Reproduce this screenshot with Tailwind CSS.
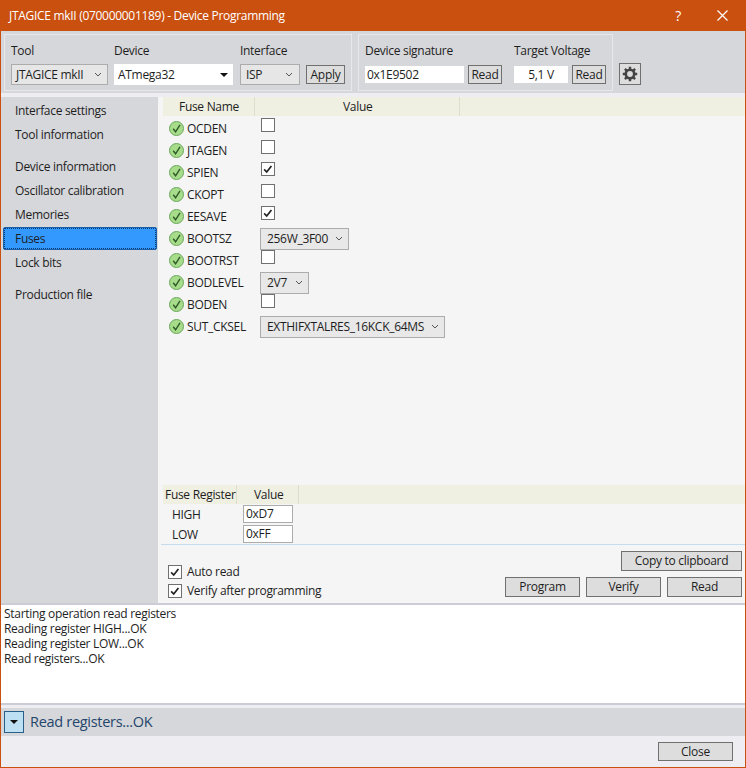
<!DOCTYPE html>
<html lang="en">
<head>
  <meta charset="UTF-8">
  <title>Device Programming</title>
  <script src="https://cdn.jsdelivr.net/npm/@tailwindcss/browser@4"></script>
</head>
<body class="font-['Open_Sans','Noto_Sans',sans-serif] text-[12px] leading-[16px] tracking-[-0.3px] text-[#1e1e1e] bg-white">
  <svg class="hidden">
    <symbol id="ok" viewBox="0 0 15 15">
      <circle cx="7.5" cy="7.5" r="7" fill="#a6dc8a" stroke="#6aa85c" stroke-width="1"/>
      <path d="M4.2 7.8 6.6 10.8 11 3.8" fill="none" stroke="#2f5a28" stroke-width="1.4"/>
    </symbol>
    <symbol id="tick" viewBox="0 0 14 14">
      <path d="M2.5 7.5 5.5 10.5 11 3.5" fill="none" stroke="#222" stroke-width="2"/>
    </symbol>
    <symbol id="chev" viewBox="0 0 8 5">
      <path d="M1 1 4 4 7 1" fill="none" stroke="#555" stroke-width="1"/>
    </symbol>
  </svg>

  <div class="w-[746px] h-[768px] flex flex-col border border-t-0 border-[#ca5010] overflow-hidden bg-[#eeeef2]">
    <!-- Title bar -->
    <div class="h-[31px] shrink-0 bg-[#ca5010] text-white flex items-center pl-[8px]">
      <span>JTAGICE mkII (070000001189) - Device Programming</span>
      <span class="ml-auto mr-[36px] text-[14px]">?</span>
      <svg class="mr-[17px]" width="11" height="11" viewBox="0 0 11 11"><path d="M.5.5l10 10M10.5.5l-10 10" stroke="#fff" stroke-width="1.2"/></svg>
    </div>

    <!-- Toolbar -->
    <div class="h-[62px] shrink-0 bg-[#d6d7da] flex items-start pt-[3px] pl-[3px]">
      <div class="w-[348px] h-[57px] border border-[#e8e8ec] flex pl-[6px] pt-[8px] gap-[6px]">
        <div class="w-[97px]">
          <div>Tool</div>
          <div class="mt-[5px] h-[21px] w-[97px] bg-[#e6e6e6] border border-[#acacac] flex items-center pl-[4px] pr-[5px] justify-between"><span>JTAGICE mkII</span><svg width="8" height="5"><use href="#chev"/></svg></div>
        </div>
        <div class="w-[119px]">
          <div>Device</div>
          <div class="mt-[5px] h-[21px] bg-white flex items-center pl-[4px] pr-[5px] justify-between"><span>ATmega32</span><svg width="8" height="4" viewBox="0 0 8 4"><path d="M0 0h8L4 4z" fill="#111"/></svg></div>
        </div>
        <div class="ml-[1px]">
          <div>Interface</div>
          <div class="mt-[5px] flex gap-[6px]">
            <div class="h-[21px] w-[60px] bg-[#e6e6e6] border border-[#acacac] flex items-center pl-[5px] pr-[6px] justify-between"><span>ISP</span><svg width="8" height="5"><use href="#chev"/></svg></div>
            <div class="h-[19px] w-[39px] mt-[1px] bg-[#dddddd] border border-[#707070] flex items-center justify-center">Apply</div>
          </div>
        </div>
      </div>
      <div class="ml-[6px] w-[255px] h-[57px] border border-[#e8e8ec] flex pl-[6px] pt-[8px]">
        <div class="w-[149px]">
          <div>Device signature</div>
          <div class="mt-[7px] flex gap-[4px]">
            <div class="h-[17px] w-[99px] bg-white flex items-center pl-[2px]">0x1E9502</div>
            <div class="h-[19px] w-[34px] -mt-[1px] bg-[#dddddd] border border-[#707070] flex items-center justify-center">Read</div>
          </div>
        </div>
        <div>
          <div>Target Voltage</div>
          <div class="mt-[7px] flex gap-[4px]">
            <div class="h-[17px] w-[54px] bg-white flex items-center justify-center">5,1 V</div>
            <div class="h-[19px] w-[34px] -mt-[1px] bg-[#dddddd] border border-[#707070] flex items-center justify-center">Read</div>
          </div>
        </div>
      </div>
      <div class="ml-[6px] mt-[29px] w-[22px] h-[22px] bg-[#dddddd] border border-[#707070] flex items-center justify-center">
        <svg width="16" height="16" viewBox="0 0 16 16"><circle cx="8" cy="8" r="4.2" fill="none" stroke="#444" stroke-width="2.6"/><path d="M8 .8v2.6M8 12.6v2.6M.8 8h2.6M12.6 8h2.6M2.9 2.9l1.9 1.9M11.2 11.2l1.9 1.9M13.1 2.9l-1.9 1.9M4.8 11.2l-1.9 1.9" stroke="#444" stroke-width="2.4"/></svg>
      </div>
    </div>

    <!-- Main -->
    <div class="h-[506px] shrink-0 mt-[4px] flex">
      <!-- Sidebar -->
      <div class="w-[157px] shrink-0 bg-[#d6d7da] pt-[2px]">
        <div class="h-[24px] pl-[14px] flex items-center">Interface settings</div>
        <div class="h-[24px] pl-[14px] flex items-center">Tool information</div>
        <div class="h-[24px] pl-[14px] flex items-center mt-[8px]">Device information</div>
        <div class="h-[24px] pl-[14px] flex items-center">Oscillator calibration</div>
        <div class="h-[24px] pl-[14px] flex items-center">Memories</div>
        <div class="h-[23px] mb-[1px] ml-[2px] w-[154px] pl-[11px] flex items-center bg-[#3399ff] border border-[#1a5fa8] rounded-[2px] outline-1 outline-dotted -outline-offset-2 outline-[#0b3d78]">Fuses</div>
        <div class="h-[24px] pl-[14px] flex items-center">Lock bits</div>
        <div class="h-[24px] pl-[14px] flex items-center mt-[8px]">Production file</div>
      </div>

      <!-- Fuses panel -->
      <div class="flex-1 bg-[#f5f5f5] flex flex-col">
        <div class="h-[19px] ml-[5px] bg-[#efefe2] flex items-center">
          <div class="w-[92px] h-full border-r border-[#dedecf] pl-[16px] flex items-center">Fuse Name</div>
          <div class="w-[205px] h-full border-r border-[#dedecf] pl-[88px] flex items-center">Value</div>
        </div>
        <div class="ml-[11px] mt-[1px] flex flex-col">
          <div class="h-[22px] flex items-center"><svg width="15" height="15"><use href="#ok"/></svg><span class="w-[75px] ml-[3px] mt-[2px]">OCDEN</span><div class="w-[14px] h-[14px] ml-[-1px] -mt-[6px] bg-white border border-[#707070]"></div></div>
          <div class="h-[22px] flex items-center"><svg width="15" height="15"><use href="#ok"/></svg><span class="w-[75px] ml-[3px] mt-[2px]">JTAGEN</span><div class="w-[14px] h-[14px] ml-[-1px] -mt-[6px] bg-white border border-[#707070]"></div></div>
          <div class="h-[22px] flex items-center"><svg width="15" height="15"><use href="#ok"/></svg><span class="w-[75px] ml-[3px] mt-[2px]">SPIEN</span><div class="w-[14px] h-[14px] ml-[-1px] -mt-[6px] bg-white border border-[#707070]"><svg class="block" width="12" height="12"><use href="#tick"/></svg></div></div>
          <div class="h-[22px] flex items-center"><svg width="15" height="15"><use href="#ok"/></svg><span class="w-[75px] ml-[3px] mt-[2px]">CKOPT</span><div class="w-[14px] h-[14px] ml-[-1px] -mt-[6px] bg-white border border-[#707070]"></div></div>
          <div class="h-[22px] flex items-center"><svg width="15" height="15"><use href="#ok"/></svg><span class="w-[75px] ml-[3px] mt-[2px]">EESAVE</span><div class="w-[14px] h-[14px] ml-[-1px] -mt-[6px] bg-white border border-[#707070]"><svg class="block" width="12" height="12"><use href="#tick"/></svg></div></div>
          <div class="h-[22px] flex items-center"><svg width="15" height="15"><use href="#ok"/></svg><span class="w-[73px] ml-[3px] mt-[2px]">BOOTSZ</span><div class="h-[22px] w-[89px] mt-[1px] bg-[#e8e8e8] border border-[#acacac] flex items-center pl-[6px] pr-[5px] justify-between"><span>256W_3F00</span><svg width="8" height="5"><use href="#chev"/></svg></div></div>
          <div class="h-[22px] flex items-center"><svg width="15" height="15"><use href="#ok"/></svg><span class="w-[75px] ml-[3px] mt-[2px]">BOOTRST</span><div class="w-[14px] h-[14px] ml-[-1px] -mt-[6px] bg-white border border-[#707070]"></div></div>
          <div class="h-[22px] flex items-center"><svg width="15" height="15"><use href="#ok"/></svg><span class="w-[73px] ml-[3px] mt-[2px]">BODLEVEL</span><div class="h-[22px] w-[49px] mt-[1px] bg-[#e8e8e8] border border-[#acacac] flex items-center pl-[6px] pr-[5px] justify-between"><span>2V7</span><svg width="8" height="5"><use href="#chev"/></svg></div></div>
          <div class="h-[22px] flex items-center"><svg width="15" height="15"><use href="#ok"/></svg><span class="w-[75px] ml-[3px] mt-[2px]">BODEN</span><div class="w-[14px] h-[14px] ml-[-1px] -mt-[6px] bg-white border border-[#707070]"></div></div>
          <div class="h-[22px] flex items-center"><svg width="15" height="15"><use href="#ok"/></svg><span class="w-[73px] ml-[3px] mt-[2px]">SUT_CKSEL</span><div class="h-[22px] w-[185px] mt-[1px] bg-[#e8e8e8] border border-[#acacac] flex items-center pl-[6px] pr-[5px] justify-between"><span>EXTHIFXTALRES_16KCK_64MS</span><svg width="8" height="5"><use href="#chev"/></svg></div></div>
        </div>

        <!-- Fuse register -->
        <div class="mt-auto ml-[5px] h-[19px] bg-[#efefe2] flex items-center">
          <div class="w-[74px] h-full border-r border-[#dedecf] flex items-center pl-[2px] whitespace-nowrap">Fuse Register</div>
          <div class="w-[62px] h-full border-r border-[#dedecf] pl-[17px] flex items-center">Value</div>
        </div>
        <div class="ml-[5px] h-[40px] flex flex-col">
          <div class="h-[20px] flex items-center"><span class="w-[80px] pl-[9px] mt-[1px]">HIGH</span><div class="w-[50px] h-[18px] bg-white border border-[#acacac] pl-[2px] flex items-center">0xD7</div></div>
          <div class="h-[20px] flex items-center"><span class="w-[80px] pl-[9px] mt-[1px]">LOW</span><div class="w-[50px] h-[18px] bg-white border border-[#acacac] pl-[2px] flex items-center">0xFF</div></div>
        </div>
        <div class="ml-[3px] border-t border-[#c5dcef] h-[59px] flex justify-between">
          <div class="pl-[7px] pt-[20px] flex flex-col gap-[5px]">
            <div class="h-[14px] flex items-center gap-[5px]"><div class="w-[14px] h-[14px] bg-white border border-[#707070]"><svg class="block" width="12" height="12"><use href="#tick"/></svg></div>Auto read</div>
            <div class="h-[14px] flex items-center gap-[5px]"><div class="w-[14px] h-[14px] bg-white border border-[#707070]"><svg class="block" width="12" height="12"><use href="#tick"/></svg></div>Verify after programming</div>
          </div>
          <div class="pr-[3px] pt-[6px] flex flex-col items-end gap-[6px]">
            <div class="w-[121px] h-[20px] bg-[#dddddd] border border-[#707070] flex items-center justify-center">Copy to clipboard</div>
            <div class="flex gap-[6px]">
              <div class="w-[75px] h-[20px] bg-[#dddddd] border border-[#707070] flex items-center justify-center">Program</div>
              <div class="w-[75px] h-[20px] bg-[#dddddd] border border-[#707070] flex items-center justify-center">Verify</div>
              <div class="w-[75px] h-[20px] bg-[#dddddd] border border-[#707070] flex items-center justify-center">Read</div>
            </div>
          </div>
        </div>
      </div>
    </div>

    <!-- Log -->
    <div class="h-[102px] shrink-0 bg-white border-y-2 border-[#ccccd6] pl-[3px] pt-[1px] leading-[15px]">
      <div>Starting operation read registers</div>
      <div>Reading register HIGH...OK</div>
      <div>Reading register LOW...OK</div>
      <div>Read registers...OK</div>
    </div>

    <!-- Status -->
    <div class="h-[28px] shrink-0 mt-[3px] bg-[#d6d7da] flex items-center pl-[3px]">
      <div class="w-[20px] h-[22px] bg-[#bee0f3] border border-[#2a5f8a] flex items-center justify-center"><svg width="8" height="4" viewBox="0 0 8 4"><path d="M0 0h8L4 4z" fill="#111"/></svg></div>
      <span class="ml-[6px] text-[14.5px] text-[#23456b]">Read registers...OK</span>
    </div>

    <!-- Footer -->
    <div class="flex-1 flex justify-end items-start pt-[6px] pr-[12px]">
      <div class="w-[75px] h-[19px] bg-[#dddddd] border border-[#707070] flex items-center justify-center">Close</div>
    </div>
  </div>
</body>
</html>
